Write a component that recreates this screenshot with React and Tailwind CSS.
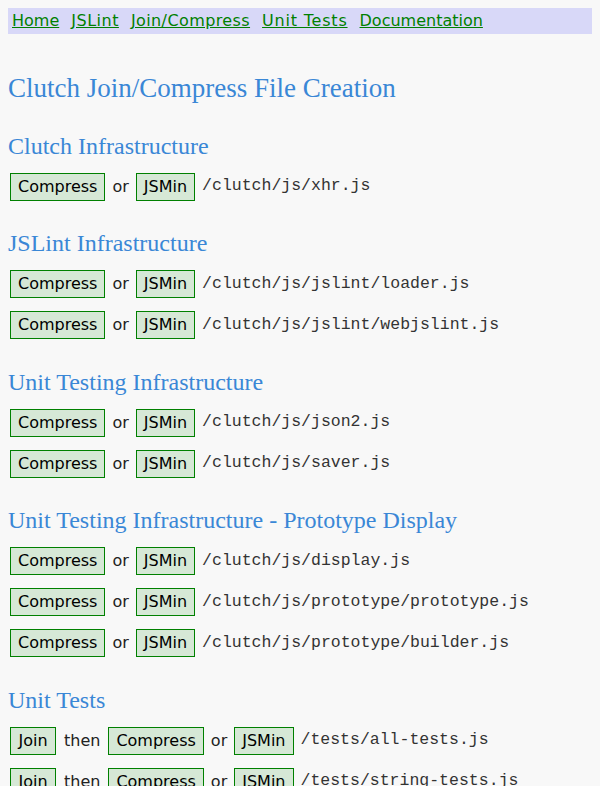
import React from 'react';

const sections = [
  {
    title: 'Clutch Infrastructure',
    rows: [{ join: false, path: '/clutch/js/xhr.js' }],
  },
  {
    title: 'JSLint Infrastructure',
    rows: [
      { join: false, path: '/clutch/js/jslint/loader.js' },
      { join: false, path: '/clutch/js/jslint/webjslint.js' },
    ],
  },
  {
    title: 'Unit Testing Infrastructure',
    rows: [
      { join: false, path: '/clutch/js/json2.js' },
      { join: false, path: '/clutch/js/saver.js' },
    ],
  },
  {
    title: 'Unit Testing Infrastructure - Prototype Display',
    rows: [
      { join: false, path: '/clutch/js/display.js' },
      { join: false, path: '/clutch/js/prototype/prototype.js' },
      { join: false, path: '/clutch/js/prototype/builder.js' },
    ],
  },
  {
    title: 'Unit Tests',
    rows: [
      { join: true, path: '/tests/all-tests.js' },
      { join: true, path: '/tests/string-tests.js' },
    ],
  },
];

const links = [
  { label: 'Home', cls: '' },
  { label: 'JSLint', cls: 'tracking-[0.5px]' },
  { label: 'Join/Compress', cls: 'tracking-[0.4px]' },
  { label: 'Unit Tests', cls: 'tracking-[0.8px]' },
  { label: 'Documentation', cls: '' },
];

const Btn = ({ children, className = '' }) => (
  <span className={`inline-flex items-center justify-center h-[28px] px-[7px] border border-[#008000] bg-[#d6e8d6] text-black ${className}`}>
    {children}
  </span>
);

const App = () => {
  return (
    <div className="min-h-screen bg-[#f8f8f8] p-2 text-[16px] text-[#222] font-['DejaVu_Sans',Verdana,sans-serif]">
      <nav className="flex gap-3 bg-[#d8d8f8] px-1 h-[26px] items-center">
        {links.map((l) => (
          <a key={l.label} href="#" className={`${l.cls} whitespace-nowrap text-[#008000] underline leading-none`}>
            {l.label}
          </a>
        ))}
      </nav>
      <h1 className="mt-[39px] text-[27px] leading-[30px] text-[#3a87d6] font-['Liberation_Serif',serif]">
        Clutch Join/Compress File Creation
      </h1>
      {sections.map((s) => (
        <section key={s.title} className="mt-[28.5px]">
          <h2 className="text-[24px] leading-[28px] text-[#3a87d6] font-['Liberation_Serif',serif]">{s.title}</h2>
          <div className="mt-[13px] flex flex-col gap-[13px]">
            {s.rows.map((r) => (
              <div key={r.path} className="flex items-center gap-[7px] pl-[2px]">
                {r.join && (
                  <>
                    <Btn className="w-[46px]">Join</Btn>
                    <span className="px-[1px]">then</span>
                  </>
                )}
                <Btn>Compress</Btn>
                <span>or</span>
                <Btn>JSMin</Btn>
                <span className="font-['Liberation_Mono',monospace] text-[16.5px] text-[#333]">{r.path}</span>
              </div>
            ))}
          </div>
        </section>
      ))}
    </div>
  );
};

export default App;
